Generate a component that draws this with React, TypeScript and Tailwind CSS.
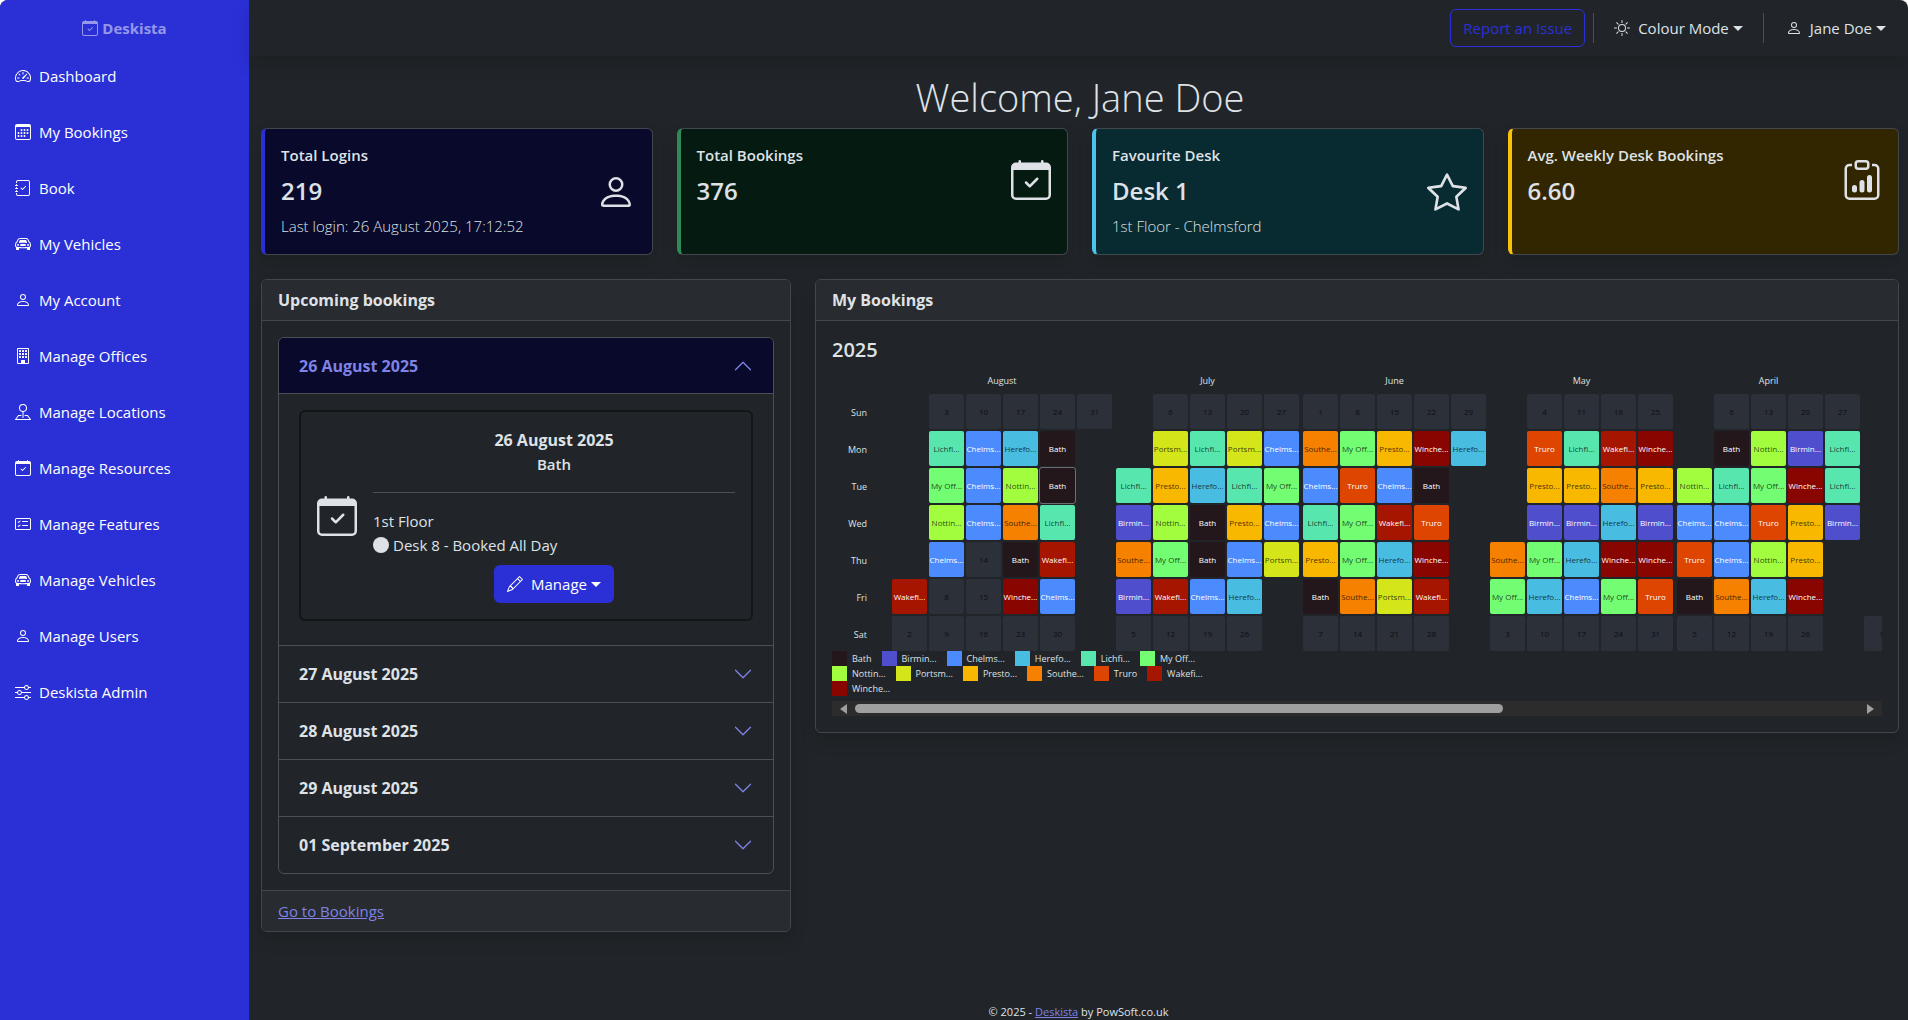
import { useState } from 'react';
import type { ReactNode } from 'react';
import type { IconType } from 'react-icons';
import {
  BsBuilding,
  BsCalendar3,
  BsCalendarCheck,
  BsCarFront,
  BsCardChecklist,
  BsChevronDown,
  BsCircleFill,
  BsClipboardData,
  BsJournalCheck,
  BsPencil,
  BsPerson,
  BsPinMap,
  BsSliders,
  BsSpeedometer2,
  BsStar,
  BsSun,
} from 'react-icons/bs';

const navItems: { label: string; icon: IconType }[] = [
  { label: 'Dashboard', icon: BsSpeedometer2 },
  { label: 'My Bookings', icon: BsCalendar3 },
  { label: 'Book', icon: BsJournalCheck },
  { label: 'My Vehicles', icon: BsCarFront },
  { label: 'My Account', icon: BsPerson },
  { label: 'Manage Offices', icon: BsBuilding },
  { label: 'Manage Locations', icon: BsPinMap },
  { label: 'Manage Resources', icon: BsCalendarCheck },
  { label: 'Manage Features', icon: BsCardChecklist },
  { label: 'Manage Vehicles', icon: BsCarFront },
  { label: 'Manage Users', icon: BsPerson },
  { label: 'Deskista Admin', icon: BsSliders },
];

const offices: Record<string, { name: string; swatch: string; text: string }> = {
  Ba: { name: 'Bath', swatch: 'bg-[#23171b]', text: 'text-white' },
  Bi: { name: 'Birmin...', swatch: 'bg-[#4f4fcd]', text: 'text-white' },
  Ch: { name: 'Chelms...', swatch: 'bg-[#4c8bfd]', text: 'text-white' },
  He: { name: 'Herefo...', swatch: 'bg-[#49bce1]', text: 'text-black/75' },
  Li: { name: 'Lichfi...', swatch: 'bg-[#58e6af]', text: 'text-black/75' },
  My: { name: 'My Off...', swatch: 'bg-[#73fd73]', text: 'text-black/75' },
  No: { name: 'Nottin...', swatch: 'bg-[#a3fd3f]', text: 'text-black/75' },
  Po: { name: 'Portsm...', swatch: 'bg-[#d4e619]', text: 'text-black/75' },
  Pr: { name: 'Presto...', swatch: 'bg-[#f9b800]', text: 'text-black/75' },
  So: { name: 'Southe...', swatch: 'bg-[#f68000]', text: 'text-black/75' },
  Tr: { name: 'Truro', swatch: 'bg-[#de4500]', text: 'text-white' },
  Wa: { name: 'Wakefi...', swatch: 'bg-[#a61500]', text: 'text-white' },
  Wi: { name: 'Winche...', swatch: 'bg-[#890500]', text: 'text-white' },
};

const legendRows = [
  ['Ba', 'Bi', 'Ch', 'He', 'Li', 'My'],
  ['No', 'Po', 'Pr', 'So', 'Tr', 'Wa'],
  ['Wi'],
];

const days = ['Sun', 'Mon', 'Tue', 'Wed', 'Thu', 'Fri', 'Sat'];

// One string per week, Sunday first. "-" is a day outside the month,
// "*" marks today, a number is a day without a booking.
const months = [
  {
    name: 'August',
    weeks: ['- - - - - Wa 2', '3 Li My No Ch 8 9', '10 Ch Ch Ch 14 15 16', '17 He No So Ba Wi 23', '24 Ba Ba* Li Wa Ch 30', '31'],
  },
  {
    name: 'July',
    weeks: ['- - Li Bi So Bi 5', '6 Po Pr No My Wa 12', '13 Li He Ba Ba Ch 19', '20 Po Li Pr Ch He 26', '27 Ch My Ch Po'],
  },
  {
    name: 'June',
    weeks: ['1 So Ch Li Pr Ba 7', '8 My Tr My My So 14', '15 Pr Ch Wa He Po 21', '22 Wi Ba Tr Wi Wa 28', '29 He'],
  },
  {
    name: 'May',
    weeks: ['- - - - So My 3', '4 Tr Pr Bi My He 10', '11 Li Pr Bi He Ch 17', '18 Wa So He Wi My 24', '25 Wi Pr Bi Wi Tr 31'],
  },
  {
    name: 'April',
    weeks: ['- - No Ch Tr Ba 5', '6 Ba Li Ch Ch So 12', '13 No My Tr No He 19', '20 Bi Wi Pr Pr Wi 26', '27 Li Li Bi'],
  },
  // Partial month, too narrow for a label
  { name: '', weeks: ['- - - - - - 1'] },
];

const bookings = ['26 August 2025', '27 August 2025', '28 August 2025', '29 August 2025', '01 September 2025'];

function Caret() {
  return <span className="ml-1 inline-block border-x-5 border-t-5 border-x-transparent border-t-current align-middle" />;
}

function Sidebar() {
  return (
    <aside className="w-[249px] shrink-0 bg-[#2a30d6]">
      <a href="#" className="flex items-center justify-center gap-1 pt-4 pb-2 font-bold leading-6 text-white/50">
        <BsCalendarCheck className="size-4" />
        Deskista
      </a>
      <nav>
        {navItems.map(({ label, icon: Icon }) => (
          <a key={label} href="#" className="flex items-center gap-2 px-[15px] py-4 leading-6 text-white">
            <Icon className="size-4" />
            {label}
          </a>
        ))}
      </nav>
    </aside>
  );
}

function TopBar() {
  return (
    <header className="relative flex h-14 items-center justify-end pr-[22px] leading-6 shadow-[0_8px_16px_rgba(0,0,0,0.15)]">
      <button className="h-[38px] rounded-md border border-[#2a30d6] px-3 text-[#2a30d6]">Report an Issue</button>
      <div className="ml-2 h-[30px] w-px bg-[#495057]" />
      <button className="ml-5 flex items-center">
        <BsSun className="mr-2 size-4" />
        Colour Mode
        <Caret />
      </button>
      <div className="ml-5 h-[30px] w-px bg-[#495057]" />
      <button className="ml-[22px] flex items-center">
        <BsPerson className="mr-2 size-4" />
        Jane Doe
        <Caret />
      </button>
    </header>
  );
}

interface StatCardProps {
  title: string;
  value: string;
  note?: string;
  icon: IconType;
  tone: string;
}

function StatCard({ title, value, note, icon: Icon, tone }: StatCardProps) {
  return (
    <div className={`rounded-md border border-l-4 border-[#42474c] px-4 py-[15px] shadow-[0_8px_16px_rgba(0,0,0,0.15)] ${tone}`}>
      <div className="flex items-center justify-between">
        <div>
          <h2 className="mb-2.5 font-semibold leading-[22px]">{title}</h2>
          <p className="mb-2.5 text-2xl leading-[29px] font-semibold">{value}</p>
          {note && <p className="mb-0.5 font-light leading-[22px]">{note}</p>}
        </div>
        <Icon className="size-10" />
      </div>
    </div>
  );
}

function Panel({ title, footer, children }: { title: string; footer?: ReactNode; children: ReactNode }) {
  return (
    <section className="overflow-hidden rounded-md border border-[#42474c] shadow-[0_8px_16px_rgba(0,0,0,0.15)]">
      <h2 className="border-b border-[#42474c] bg-[#282b2f] px-4 py-2 text-base font-bold leading-6">{title}</h2>
      <div className="p-4">{children}</div>
      {footer && <div className="border-t border-[#42474c] bg-[#282b2f] px-4 py-2 leading-6">{footer}</div>}
    </section>
  );
}

function BookingDetails({ date }: { date: string }) {
  return (
    <div className="border-t border-[#495057] px-5 pt-4 pb-6">
      <div className="flex items-center gap-4 rounded-md border-2 border-[#131619] p-4">
        <BsCalendarCheck className="size-10 shrink-0" />
        <div className="flex-1 leading-6">
          <p className="text-center text-base font-bold">{date}</p>
          <p className="text-center font-semibold">Bath</p>
          <hr className="my-4 border-[#4d5155]" />
          <p>1st Floor</p>
          <p className="flex items-center gap-1">
            <BsCircleFill className="size-4" />
            Desk 8 - Booked All Day
          </p>
          <div className="mt-2 flex justify-center">
            <button className="flex h-[38px] items-center rounded-md bg-[#2a30d6] px-[13px] text-white">
              <BsPencil className="mr-2 size-4" />
              Manage
              <Caret />
            </button>
          </div>
        </div>
      </div>
    </div>
  );
}

function UpcomingBookings() {
  const [open, setOpen] = useState<string | null>(bookings[0]);

  return (
    <Panel title="Upcoming bookings" footer={<a href="#" className="text-[#7f83e6] underline">Go to Bookings</a>}>
      <div className="divide-y divide-[#495057] overflow-hidden rounded-md border border-[#495057]">
        {bookings.map((date) => {
          const isOpen = date === open;
          return (
            <div key={date}>
              <button
                aria-expanded={isOpen}
                onClick={() => setOpen(isOpen ? null : date)}
                className={`flex w-full items-center justify-between px-5 py-4 text-left text-base font-bold leading-6 ${
                  isOpen ? 'bg-[#08092b] pb-[15px] text-[#7f83e6]' : ''
                }`}
              >
                {date}
                <BsChevronDown className={`size-5 text-[#7f83e6] ${isOpen ? 'rotate-180' : ''}`} />
              </button>
              {isOpen && <BookingDetails date={date} />}
            </div>
          );
        })}
      </div>
    </Panel>
  );
}

function DayCell({ code }: { code: string }) {
  if (code === '-') return <div className="size-[35px]" />;

  const office = offices[code.replace('*', '')];
  const today = code.endsWith('*') ? 'outline outline-[#6b6e72]' : '';
  return (
    <div
      className={`flex size-[35px] items-center justify-center rounded-xs text-[8px] font-medium whitespace-nowrap ${
        office ? `${office.swatch} ${office.text}` : 'bg-[#2c3038] text-[#0c0e10]'
      } ${today}`}
    >
      {office ? office.name : code}
    </div>
  );
}

function BookingsHeatmap() {
  return (
    <Panel title="My Bookings">
      <h3 className="text-xl leading-[26px] font-semibold">2025</h3>
      <div className="mt-2.5 flex overflow-hidden text-[9px] font-medium">
        <div className="mt-[21px] mr-[25px] flex w-[35px] shrink-0 flex-col gap-0.5 text-right">
          {days.map((day) => (
            <div key={day} className="h-[35px] leading-[37px]">{day}</div>
          ))}
        </div>
        <div className="flex gap-1">
          {months.map((month) => (
            <div key={month.name} className="shrink-0">
              <p className="mb-1.5 h-[15px] text-center leading-[15px]">{month.name}</p>
              <div className="flex gap-0.5">
                {month.weeks.map((week) => (
                  <div key={week} className="flex flex-col gap-0.5">
                    {week.split(' ').map((code, i) => (
                      <DayCell key={i} code={code} />
                    ))}
                  </div>
                ))}
              </div>
            </div>
          ))}
        </div>
      </div>
      <div className="text-[9px] leading-[15px] font-medium">
        {legendRows.map((row) => (
          <div key={row[0]} className="flex gap-2.5">
            {row.map((code) => (
              <div key={code} className="flex gap-[5px]">
                <span className={`size-[15px] ${offices[code].swatch}`} />
                {offices[code].name}
              </div>
            ))}
          </div>
        ))}
      </div>
      {/* Scrollbar */}
      <div className="mt-[5px] flex h-[15px] items-center gap-2 bg-[#2c2c2c] px-2">
        <div className="border-y-5 border-r-7 border-y-transparent border-r-[#9f9f9f]" />
        <div className="flex-1">
          <div className="h-[9px] w-[64.5%] rounded-full bg-[#9f9f9f]" />
        </div>
        <div className="border-y-5 border-l-7 border-y-transparent border-l-[#9f9f9f]" />
      </div>
    </Panel>
  );
}

export default function App() {
  return (
    <div className="flex min-h-screen overflow-hidden rounded-t-lg bg-[#212529] font-['Open_Sans','Noto_Sans',sans-serif] text-[15px] text-[#dee2e6]">
      <Sidebar />
      <div className="flex min-w-0 flex-1 flex-col">
        <TopBar />
        <main className="flex-1 pt-[18px] pr-[9px] pl-3">
          <h1 className="mb-2 text-center text-[38px] leading-[46px] font-light">Welcome, Jane Doe</h1>
          <div className="grid grid-cols-4 gap-6">
            <StatCard
              title="Total Logins"
              value="219"
              note="Last login: 26 August 2025, 17:12:52"
              icon={BsPerson}
              tone="border-l-[#2a30d6] bg-[#08092b]"
            />
            <StatCard title="Total Bookings" value="376" icon={BsCalendarCheck} tone="border-l-[#2f8a58] bg-[#051b11]" />
            <StatCard
              title="Favourite Desk"
              value="Desk 1"
              note="1st Floor - Chelmsford"
              icon={BsStar}
              tone="border-l-[#4cc3e8] bg-[#082a31]"
            />
            <StatCard title="Avg. Weekly Desk Bookings" value="6.60" icon={BsClipboardData} tone="border-l-[#f9c107] bg-[#322600]" />
          </div>
          <div className="mt-6 grid grid-cols-3 items-start gap-6">
            <UpcomingBookings />
            <div className="col-span-2">
              <BookingsHeatmap />
            </div>
          </div>
        </main>
        <footer className="text-center text-[11px] leading-4">
          © 2025 - <a href="#" className="text-[#7f83e6] underline">Deskista</a> by PowSoft.co.uk
        </footer>
      </div>
    </div>
  );
}
